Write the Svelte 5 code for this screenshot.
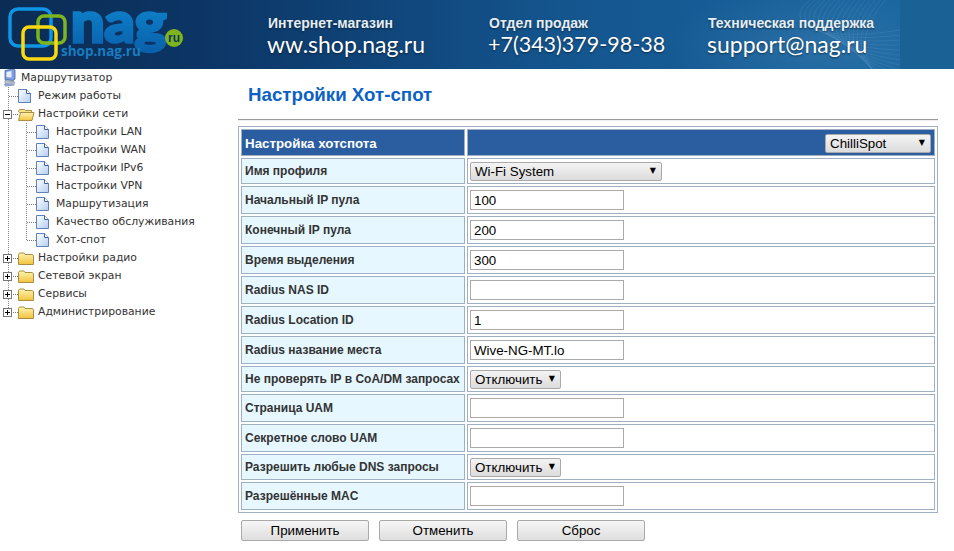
<script>
	// Router admin page: branded banner, menu tree on the left, hotspot settings form on the right.
	const contacts = [
		{ head: 'Интернет-магазин', main: 'ww.shop.nag.ru', cls: '' },
		{ head: 'Отдел продаж', main: '+7(343)379-98-38', cls: 'phone' },
		{ head: 'Техническая поддержка', main: 'support@nag.ru', cls: '' }
	];

	const tree = [
		{ label: 'Режим работы', kind: 'page', depth: 0 },
		{ label: 'Настройки сети', kind: 'open', depth: 0 },
		{ label: 'Настройки LAN', kind: 'page', depth: 1 },
		{ label: 'Настройки WAN', kind: 'page', depth: 1 },
		{ label: 'Настройки IPv6', kind: 'page', depth: 1 },
		{ label: 'Настройки VPN', kind: 'page', depth: 1 },
		{ label: 'Маршрутизация', kind: 'page', depth: 1 },
		{ label: 'Качество обслуживания', kind: 'page', depth: 1 },
		{ label: 'Хот-спот', kind: 'page', depth: 1, last: true },
		{ label: 'Настройки радио', kind: 'closed', depth: 0 },
		{ label: 'Сетевой экран', kind: 'closed', depth: 0 },
		{ label: 'Сервисы', kind: 'closed', depth: 0 },
		{ label: 'Администрирование', kind: 'closed', depth: 0, last: true }
	];

	const rows = [
		{ label: 'Имя профиля', select: 'Wi-Fi System', wide: true },
		{ label: 'Начальный IP пула', value: '100' },
		{ label: 'Конечный IP пула', value: '200' },
		{ label: 'Время выделения', value: '300' },
		{ label: 'Radius NAS ID', value: '' },
		{ label: 'Radius Location ID', value: '1' },
		{ label: 'Radius название места', value: 'Wive-NG-MT.lo' },
		{ label: 'Не проверять IP в CoA/DM запросах', select: 'Отключить' },
		{ label: 'Страница UAM', value: '' },
		{ label: 'Секретное слово UAM', value: '' },
		{ label: 'Разрешить любые DNS запросы', select: 'Отключить' },
		{ label: 'Разрешённые MAC', value: '' }
	];

	// swoosh of thin lines at the right end of the banner
	const mesh = Array.from({ length: 16 }, (_, i) => {
		const k = i * 5;
		return `M${60 + k} 0C${30 + k} ${22 + k / 4} ${70 + k / 2} ${44 + k / 5} ${150} ${30 + k}`;
	});
</script>

<svg class="defs" width="0" height="0">
	<defs>
		<linearGradient id="pg" x1="0" y1="0" x2="1" y2="1">
			<stop offset="0" stop-color="#ffffff" />
			<stop offset="1" stop-color="#b4cdf2" />
		</linearGradient>
		<linearGradient id="fd" x1="0" y1="0" x2="0" y2="1">
			<stop offset="0" stop-color="#fff4b4" />
			<stop offset="1" stop-color="#f1c33c" />
		</linearGradient>
		<linearGradient id="nagfill" x1="0" y1="0" x2="0" y2="1">
			<stop offset="0" stop-color="#0f8ed8" />
			<stop offset="1" stop-color="#0a5ea8" />
		</linearGradient>
	</defs>
</svg>

{#snippet pageIcon()}
	<svg class="ico" width="18" height="18" viewBox="0 0 18 18">
		<path d="M0.500 2.500h8l4 4v9h-12z" fill="url(#pg)" stroke="#5f82bb" />
		<path d="M8.500 2.500v4h4" fill="#fff" stroke="#3f62a0" />
	</svg>
{/snippet}

{#snippet folderIcon(open)}
	<svg class="ico" width="18" height="18" viewBox="0 0 18 18">
		{#if open}
			<path d="M0.500 6.500l1-2h5l1 1h6v2h-12z" fill="#f7e08c" stroke="#a88f42" />
			<path d="M0.500 15.500l2-8h13.500l-2 8z" fill="url(#fd)" stroke="#a88f42" />
		{:else}
			<path d="M0.500 15.500v-10l1-1.500h4.500l1 1.500h7l1.500 1v9z" fill="url(#fd)" stroke="#a88f42" />
		{/if}
	</svg>
{/snippet}

{#snippet picker(text, cls)}
	<span class="picker {cls}">
		<select>
			<option>{text}</option>
		</select>
	</span>
{/snippet}

<header class="banner">
	<svg class="mesh" width="150" height="69" viewBox="0 0 150 69">
		{#each mesh as d}
			<path {d} fill="none" stroke="#8fc3e6" stroke-width="0.600" opacity="0.22" />
		{/each}
	</svg>
	<svg class="logo" width="200" height="69" viewBox="0 0 200 69">
		<text x="71" y="42" class="nag" fill="url(#nagfill)" stroke="url(#nagfill)" stroke-width="3.500" textLength="95" lengthAdjust="spacingAndGlyphs">nag</text>
		<text x="61" y="56" class="shop">shop.nag.ru</text>
		<circle cx="174" cy="38" r="9" fill="#7fb51c" />
		<text x="174" y="42" class="ru">ru</text>
		<rect x="10" y="9" width="41" height="37" rx="8" fill="none" stroke="#0e95e6" stroke-width="3.500" />
		<rect x="38" y="16" width="27" height="27" rx="6" fill="none" stroke="#7fb51c" stroke-width="3.500" />
		<rect x="23" y="27" width="33" height="32" rx="6" fill="none" stroke="#fbd90e" stroke-width="3.500" />
	</svg>
	<div class="contacts">
		{#each contacts as c}
			<div class="contact {c.cls}">
				<b>{c.head}</b>
				<span>{c.main}</span>
			</div>
		{/each}
	</div>
</header>

<div class="page">
	<nav class="tree">
		<div class="root">
			<svg class="ico" width="16" height="18" viewBox="0 0 16 18">
				<path d="M3 1.500l8-1.500 2 1v9l-2 1.500-8-1z" fill="#7f9fe0" stroke="#3f5fa8" stroke-width="0.800" />
				<path d="M4.500 3l5-1v6.500l-5-.5z" fill="#e8f0ff" />
				<path d="M3 11.500l9 1 1 1.500-10 .5z" fill="#c4ccd8" stroke="#6a7488" stroke-width="0.600" />
				<path d="M1.500 15l11-.5v2l-9 1z" fill="#8aa2cc" />
			</svg>
			<span>Маршрутизатор</span>
		</div>
		{#each tree as n}
			<div class="node" class:nested={n.depth === 1} class:last={n.last}>
				<i class="joint"></i>
				{#if n.kind !== 'page'}
					<i class="box" class:plus={n.kind === 'closed'}></i>
				{/if}
				{#if n.kind === 'page'}
					{@render pageIcon()}
				{:else}
					{@render folderIcon(n.kind === 'open')}
				{/if}
				<span>{n.label}</span>
			</div>
		{/each}
	</nav>

	<main class="content">
		<h1>Настройки Хот-спот</h1>
		<hr />
		<table>
			<tbody>
				<tr class="head">
					<td class="lbl">Настройка хотспота</td>
					<td class="val">{@render picker('ChilliSpot', 'mode')}</td>
				</tr>
				{#each rows as r}
					<tr class:short={r.select}>
						<td class="lbl">{r.label}</td>
						<td class="val">
							{#if r.select}
								{@render picker(r.select, r.wide ? 'wide' : 'small')}
							{:else}
								<input type="text" value={r.value} />
							{/if}
						</td>
					</tr>
				{/each}
			</tbody>
		</table>
		<div class="actions">
			<button>Применить</button>
			<button>Отменить</button>
			<button>Сброс</button>
		</div>
	</main>
</div>

<style>
	:global(body) {
		margin: 0;
		background: #fff;
		overflow: hidden;
	}
	.defs {
		position: absolute;
	}
	.banner {
		position: relative;
		display: flex;
		height: 69px;
		background:
			linear-gradient(90deg, transparent 900px, #1a6296 900px),
			radial-gradient(ellipse 150px 60px at 820px 45px, rgba(110, 170, 210, 0.2), transparent 100%),
			linear-gradient(90deg, #0b2c54 0, #0c3565 200px, #14558e 560px, #1a659f 900px);
		overflow: hidden;
	}
	.mesh {
		position: absolute;
		left: 750px;
		top: 0;
	}
	.logo {
		position: relative;
		flex: none;
		width: 200px;
		margin-right: 67px;
	}
	.nag {
		font: 700 55px Lato, sans-serif;
	}
	.shop {
		font: 700 13.500px "Open Sans", sans-serif;
		fill: #1a7cc0;
	}
	.ru {
		font: 700 12px "Liberation Sans", sans-serif;
		text-anchor: middle;
		fill: #0c3a60;
	}
	.contacts {
		position: relative;
		display: grid;
		grid-template-columns: 221px 219px auto;
		height: 54px;
		padding-top: 15px;
		white-space: nowrap;
	}
	.contact {
		display: flex;
		flex-direction: column;
		color: #fff;
		text-shadow: 0 1px 2px rgba(0, 0, 0, 0.5);
	}
	.contact b {
		padding-left: 1px;
		font: 700 14px/16px "Liberation Sans", sans-serif;
		color: #e6edf3;
	}
	.contact span {
		font: 400 23px/27px Lato, sans-serif;
	}
	.contact.phone span {
		font-size: 21.500px;
	}

	.page {
		display: flex;
	}
	.tree {
		flex: none;
		width: 238px;
		font: 10.800px/18px "DejaVu Sans", sans-serif;
		color: #333;
	}
	.root,
	.node {
		position: relative;
		display: flex;
		align-items: center;
		height: 18px;
		white-space: nowrap;
	}
	.root {
		padding-left: 2px;
	}
	.root span {
		margin-left: 1px;
	}
	.node {
		padding-left: 18px;
		background: repeating-linear-gradient(#888 0 1px, transparent 1px 2px) 8px 0 / 1px 100% no-repeat;
	}
	.node.last {
		background-size: 1px 9px;
	}
	.node.nested {
		padding-left: 36px;
		background:
			repeating-linear-gradient(#888 0 1px, transparent 1px 2px) 8px 0 / 1px 100% no-repeat,
			repeating-linear-gradient(#888 0 1px, transparent 1px 2px) 26px 0 / 1px 100% no-repeat;
	}
	.node.nested.last {
		background-size: 1px 100%, 1px 9px;
	}
	.joint {
		position: absolute;
		left: 9px;
		top: 9px;
		width: 9px;
		border-top: 1px dotted #777;
	}
	.nested .joint {
		left: 27px;
	}
	.box {
		position: absolute;
		left: 3px;
		top: 5px;
		width: 9px;
		height: 9px;
		box-sizing: border-box;
		border: 1px solid #777;
		background: linear-gradient(#000, #000) center / 5px 1px no-repeat #fff;
	}
	.box.plus {
		background:
			linear-gradient(#000, #000) center / 5px 1px no-repeat,
			linear-gradient(#000, #000) center / 1px 5px no-repeat,
			#fff;
	}
	.ico {
		flex: none;
		margin-right: 2px;
	}

	.content {
		flex: none;
		width: 700px;
		font-family: "Liberation Sans", sans-serif;
	}
	h1 {
		margin: 0;
		padding: 15px 0 0 10px;
		font: 700 18.720px/22px "Liberation Sans", sans-serif;
		color: #0b62c4;
	}
	hr {
		margin: 13px 0 6px;
		border: 0;
		height: 1px;
		background: #999;
		box-shadow: 0 1px 0 #eee;
	}
	table {
		width: 700px;
		border-collapse: separate;
		border-spacing: 2px;
		border: 1px solid #a0b0c4;
		table-layout: fixed;
	}
	td {
		border: 1px solid #a0b0c4;
		padding: 0;
		height: 28px;
		box-sizing: border-box;
	}
	tr.short td {
		height: 26px;
	}
	.lbl {
		width: 224px;
		padding-left: 3px;
		background: #e6f7ff;
		font-size: 12px;
		font-weight: 700;
		color: #333;
		white-space: nowrap;
	}
	.val {
		padding-left: 2px;
		padding-right: 3px;
	}
	.head .lbl {
		padding-top: 1px;
		background: #2a5ea1;
		color: #fff;
		font-size: 13.333px;
	}
	.head .val {
		padding-top: 1px;
		background: #2a5ea1;
		text-align: right;
	}
	.head td {
		height: 27px;
	}
	input {
		display: block;
		box-sizing: border-box;
		width: 154px;
		height: 20px;
		padding: 1px 3px;
		margin: 0;
		border: 1px solid #aaa;
		background: #fff;
		font: 13.333px "Liberation Sans", sans-serif;
		color: #000;
	}
	.picker {
		position: relative;
		display: inline-block;
		vertical-align: middle;
	}
	.picker::after {
		content: "▼";
		position: absolute;
		right: 6px;
		top: 3px;
		font: 8px/12px "DejaVu Sans", sans-serif;
		color: #000;
		pointer-events: none;
	}
	select {
		display: block;
		box-sizing: border-box;
		appearance: none;
		width: 100%;
		height: 19px;
		padding: 0 4px;
		margin: 0;
		border: 1px solid #a9a9a9;
		border-radius: 2px;
		background: linear-gradient(#f4f4f4, #dcdcdc);
		font: 13.333px "Liberation Sans", sans-serif;
		color: #000;
	}
	.wide {
		width: 192px;
	}
	.small {
		width: 91px;
	}
	.mode {
		width: 106px;
		text-align: left;
	}
	.actions {
		display: flex;
		gap: 10px;
		padding: 7px 0 0 3px;
	}
	button {
		box-sizing: border-box;
		width: 128px;
		height: 21px;
		padding: 0;
		border: 1px solid #a9a9a9;
		border-radius: 2px;
		background: linear-gradient(#f6f6f6, #dedede);
		font: 13.333px "Liberation Sans", sans-serif;
		color: #000;
	}
</style>
